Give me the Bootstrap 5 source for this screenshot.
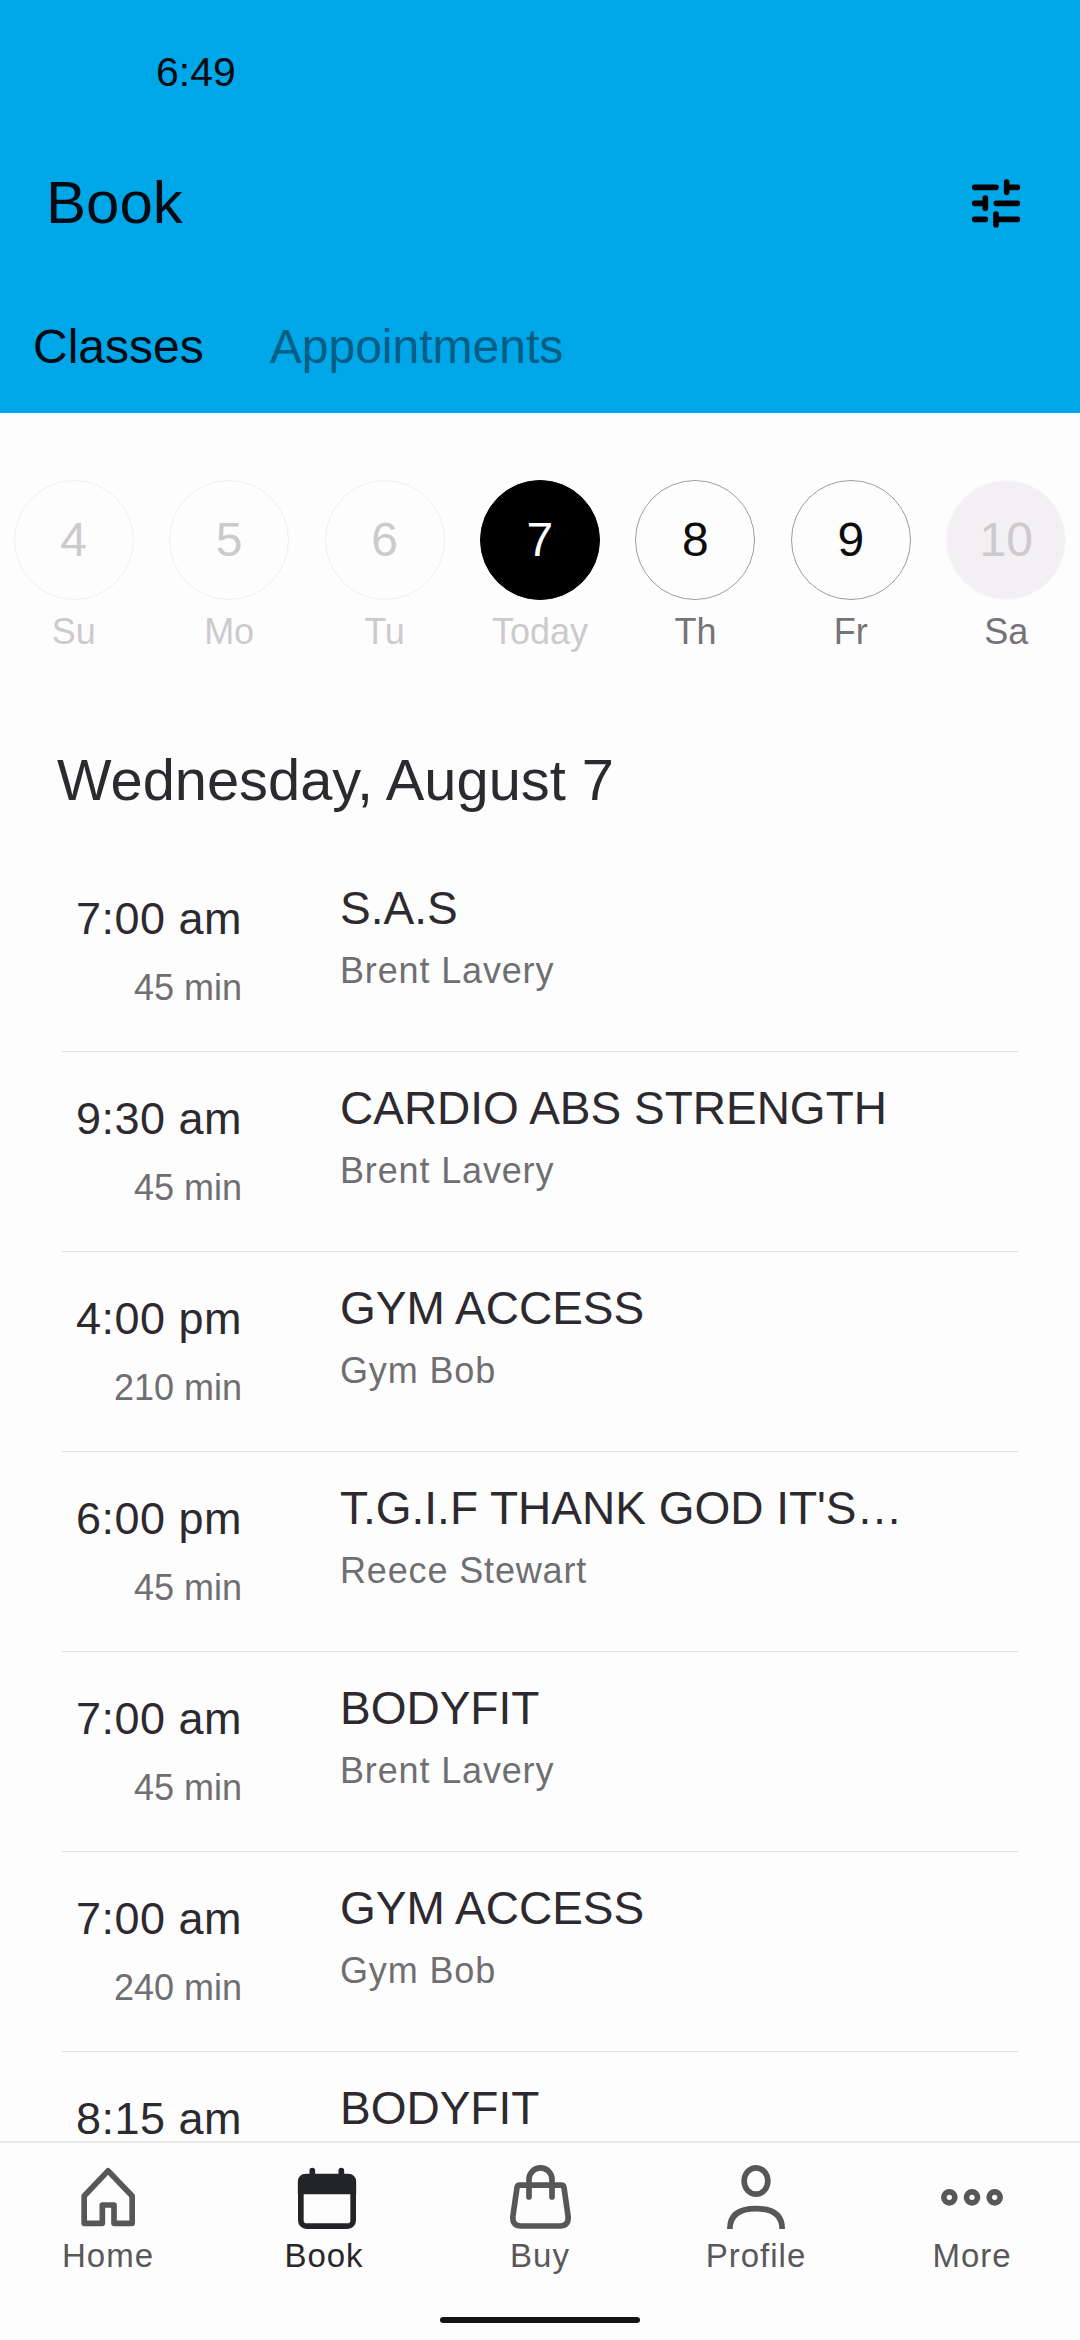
<!DOCTYPE html>
<html lang="en">
<head>
<meta charset="utf-8">
<meta name="viewport" content="width=device-width, initial-scale=1">
<title>Book</title>
<link href="https://cdn.jsdelivr.net/npm/bootstrap@5.3.0/dist/css/bootstrap.min.css" rel="stylesheet">
<style>
  body { font-family: "Liberation Sans", Arial, sans-serif; background: #fefdfe; color: #2c2a2e; }
  .screen { height: 2340px; }
  .app-header { background: #00a7e8; color: #040a12; }
  .status-bar { height: 127px; padding: 42px 0 0 156px; font-size: 41px; line-height: 60px; }
  .title-row { height: 152px; padding: 0 52px 0 46px; }
  .title-row h1 { font-size: 60px; line-height: 68px; font-weight: 400; }
  .title-row svg { width: 64px; height: 64px; }
  .tabs-row { height: 134px; padding: 2px 0 0 33px; gap: 66px; font-size: 48px; line-height: 60px; }
  .tabs-row a { color: #040a12; }
  .tabs-row a.tab-off { color: #045d84; }
  .days { padding-top: 67px; margin: 0 -4px; }
  .day-num { width: 120px; height: 120px; font-size: 48px; line-height: 1; border: 1px solid #9d9c9f; color: #0c0b0d; }
  .day-label { margin-top: 12px; font-size: 36px; line-height: 40px; color: #757377; }
  .past .day-num { border-color: #f0eef1; color: #cccacd; }
  .past .day-label, .today .day-label { color: #cccacd; }
  .today .day-num { background: #000; border-color: #000; color: #fff; }
  .closed .day-num { background: #f2f0f3; border-color: #f8f6f9; color: #cccacd; }
  .date-heading { margin: 93px 0 37px 57px; font-size: 57.800px; line-height: 70px; font-weight: 400; }
  .schedule { margin: 0 62px; }
  .session { height: 200px; border-bottom: 1px solid #e0dfe2; }
  .when { width: 180px; padding-top: 45px; }
  .when .clock { font-size: 45px; line-height: 44px; letter-spacing: .5px; }
  .when .length { margin-top: 27px; font-size: 36px; line-height: 40px; color: #6f6e71; }
  .what { padding: 31px 90px 0 98px; min-width: 0; }
  .what .name { font-size: 46px; line-height: 50px; }
  .what .coach { margin-top: 18px; font-size: 36px; line-height: 40px; letter-spacing: .85px; color: #6f6e71; }
  .bottom-nav { height: 199px; border-top: 2px solid #ebebec; background: #fefdfe; }
  .bottom-nav a { color: #58585b; font-size: 33px; line-height: 38px; letter-spacing: 1px; padding-top: 21px; }
  .bottom-nav a.current { color: #29272b; }
  .bottom-nav svg { width: 64px; height: 68px; margin-bottom: 5px; fill: none; stroke: #555759; stroke-width: 17; }
  .bottom-nav .current svg { stroke: #222427; overflow: visible; }
  .home-bar { width: 200px; height: 6px; margin-bottom: 17px; background: #131216; }
</style>
</head>
<body>
<div class="screen d-flex flex-column overflow-hidden">
  <header class="app-header flex-shrink-0">
    <div class="status-bar">6:49</div>
    <div class="title-row d-flex align-items-center justify-content-between">
      <h1 class="mb-0">Book</h1>
      <svg viewBox="72 62 192 192" fill="none" stroke="#000" stroke-width="17" stroke-linecap="round">
        <path d="M104 111H168M200 95V126M200 111H232M104 159H136M136 143V174M169 159H232M104 207H136M168 191V223M168 207H232"/>
      </svg>
    </div>
    <nav class="tabs-row d-flex align-items-center">
      <a class="text-decoration-none">Classes</a>
      <a class="text-decoration-none tab-off">Appointments</a>
    </nav>
  </header>

  <main class="flex-fill overflow-hidden">
    <div class="days d-flex text-center">
      <div class="col past"><div class="day-num rounded-circle mx-auto d-flex align-items-center justify-content-center">4</div><div class="day-label">Su</div></div>
      <div class="col past"><div class="day-num rounded-circle mx-auto d-flex align-items-center justify-content-center">5</div><div class="day-label">Mo</div></div>
      <div class="col past"><div class="day-num rounded-circle mx-auto d-flex align-items-center justify-content-center">6</div><div class="day-label">Tu</div></div>
      <div class="col today"><div class="day-num rounded-circle mx-auto d-flex align-items-center justify-content-center">7</div><div class="day-label">Today</div></div>
      <div class="col"><div class="day-num rounded-circle mx-auto d-flex align-items-center justify-content-center">8</div><div class="day-label">Th</div></div>
      <div class="col"><div class="day-num rounded-circle mx-auto d-flex align-items-center justify-content-center">9</div><div class="day-label">Fr</div></div>
      <div class="col closed"><div class="day-num rounded-circle mx-auto d-flex align-items-center justify-content-center">10</div><div class="day-label">Sa</div></div>
    </div>

    <h2 class="date-heading">Wednesday, August 7</h2>

    <div class="schedule">
      <div class="session d-flex">
        <div class="when text-end flex-shrink-0"><div class="clock">7:00 am</div><div class="length">45 min</div></div>
        <div class="what flex-fill"><div class="name text-nowrap">S.A.S</div><div class="coach">Brent Lavery</div></div>
      </div>
      <div class="session d-flex">
        <div class="when text-end flex-shrink-0"><div class="clock">9:30 am</div><div class="length">45 min</div></div>
        <div class="what flex-fill"><div class="name text-nowrap">CARDIO ABS STRENGTH</div><div class="coach">Brent Lavery</div></div>
      </div>
      <div class="session d-flex">
        <div class="when text-end flex-shrink-0"><div class="clock">4:00 pm</div><div class="length">210 min</div></div>
        <div class="what flex-fill"><div class="name text-nowrap">GYM ACCESS</div><div class="coach">Gym Bob</div></div>
      </div>
      <div class="session d-flex">
        <div class="when text-end flex-shrink-0"><div class="clock">6:00 pm</div><div class="length">45 min</div></div>
        <div class="what flex-fill"><div class="name text-nowrap">T.G.I.F THANK GOD IT'S…</div><div class="coach">Reece Stewart</div></div>
      </div>
      <div class="session d-flex">
        <div class="when text-end flex-shrink-0"><div class="clock">7:00 am</div><div class="length">45 min</div></div>
        <div class="what flex-fill"><div class="name text-nowrap">BODYFIT</div><div class="coach">Brent Lavery</div></div>
      </div>
      <div class="session d-flex">
        <div class="when text-end flex-shrink-0"><div class="clock">7:00 am</div><div class="length">240 min</div></div>
        <div class="what flex-fill"><div class="name text-nowrap">GYM ACCESS</div><div class="coach">Gym Bob</div></div>
      </div>
      <div class="session d-flex">
        <div class="when text-end flex-shrink-0"><div class="clock">8:15 am</div></div>
        <div class="what flex-fill"><div class="name text-nowrap">BODYFIT</div></div>
      </div>
    </div>
  </main>

  <footer class="bottom-nav flex-shrink-0 d-flex flex-column justify-content-between">
    <nav class="d-flex text-center">
      <a class="col text-decoration-none d-flex flex-column align-items-center">
        <svg viewBox="228 312 192 204" stroke-linejoin="round"><path d="M324 332.500L396.500 408V490H342V435H307V490H252.500V408Z"/></svg>
        <span>Home</span>
      </a>
      <a class="col text-decoration-none d-flex flex-column align-items-center current">
        <svg viewBox="876 312 192 204"><rect x="902.500" y="350.500" width="157" height="148" rx="17"/><path d="M902 394V367Q902 350 919 350H1043Q1060 350 1060 367V394Z" fill="#222427"/><path d="M937 332V352M1024 332V352" stroke-linecap="round"/></svg>
        <span>Book</span>
      </a>
      <a class="col text-decoration-none d-flex flex-column align-items-center">
        <svg viewBox="384 312 192 204" stroke-linecap="round" stroke-linejoin="round"><path d="M447 411V358A34.500 34.500 0 0 1 516 358V411"/><path d="M419 375.500H544Q551 375.500 552 383L564.500 470Q566 498 540 498H423Q397 498 398.500 470L411 383Q412 375.500 419 375.500Z"/></svg>
        <span>Buy</span>
      </a>
      <a class="col text-decoration-none d-flex flex-column align-items-center">
        <svg viewBox="72 312 192 204"><ellipse cx="168" cy="363" rx="35.500" ry="39.500"/><path d="M89.500 507C89.500 462 122 446 168 446S246.500 462 246.500 507"/></svg>
        <span>Profile</span>
      </a>
      <a class="col text-decoration-none d-flex flex-column align-items-center">
        <svg viewBox="720 312 192 204"><circle cx="748" cy="412" r="16.500"/><circle cx="816" cy="412" r="16.500"/><circle cx="884" cy="412" r="16.500"/></svg>
        <span>More</span>
      </a>
    </nav>
    <div class="home-bar rounded-pill mx-auto"></div>
  </footer>
</div>
<script src="https://cdn.jsdelivr.net/npm/bootstrap@5.3.0/dist/js/bootstrap.bundle.min.js"></script>
</body>
</html>
